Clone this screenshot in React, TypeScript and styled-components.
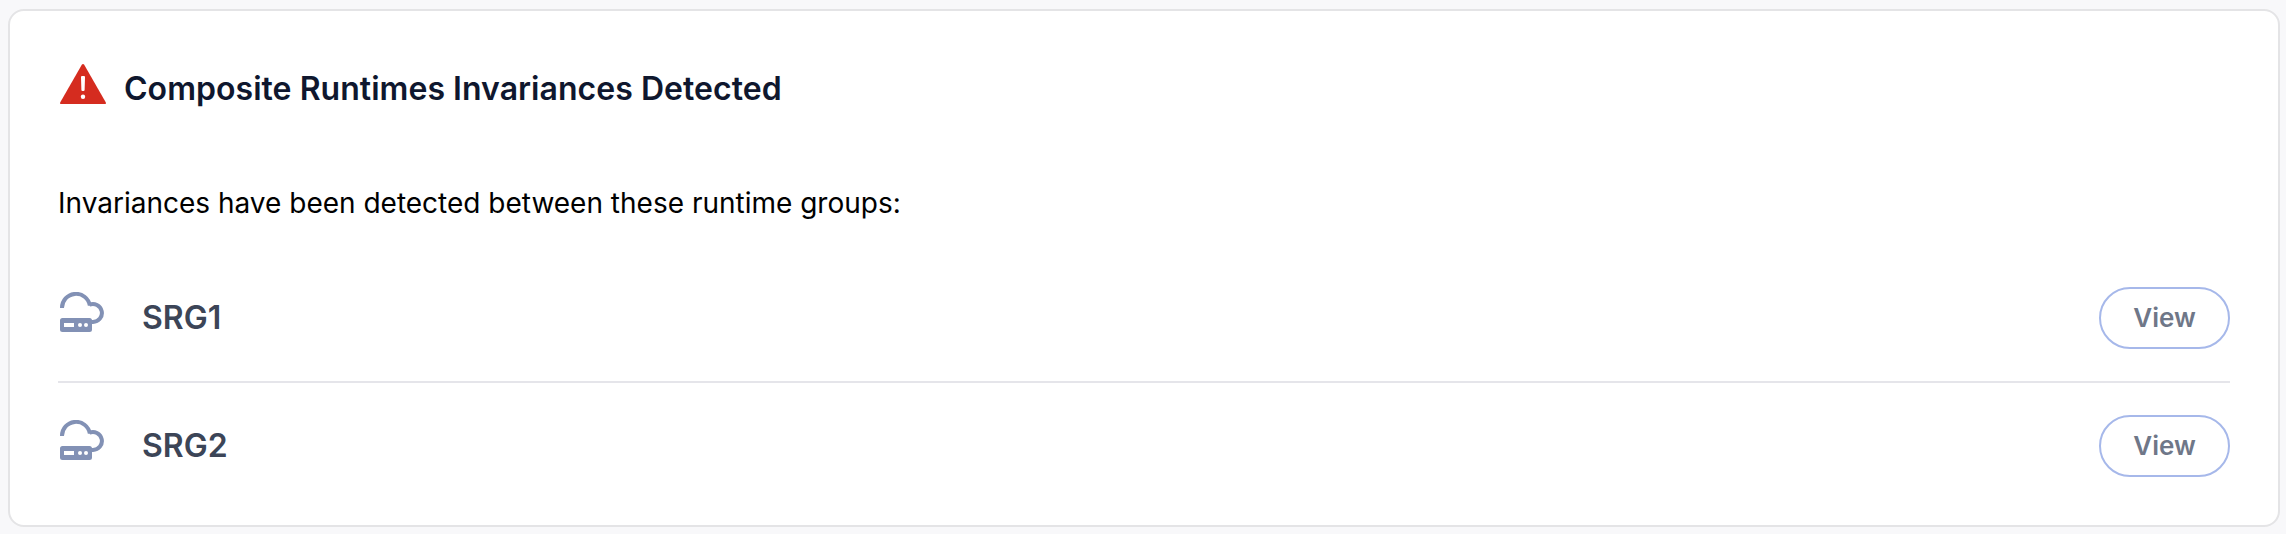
import React from "react";
import styled, { createGlobalStyle } from "styled-components";

const GlobalStyle = createGlobalStyle`
  * { box-sizing: border-box; }
  body {
    margin: 0;
    background: #f8f8fa;
    font-family: Inter, "Liberation Sans", sans-serif;
  }
`;

const Page = styled.main`
  height: 534px;
  padding: 9px 6px 7px 8px;
`;

const Card = styled.section`
  display: flex;
  flex-direction: column;
  height: 518px;
  padding: 46px 48px 0;
  border: 2px solid #e4e4e6;
  border-radius: 16px;
  background: #ffffff;
`;

const Header = styled.header`
  display: flex;
  align-items: flex-start;
  height: 120px;
`;

const WarningSvg = styled.svg`
  flex: none;
  width: 46px;
  height: 40px;
  margin: 7px 18px 0 2px;
`;

const Title = styled.h1`
  margin: 12px 0 0;
  color: #0f172e;
  font-size: 32px;
  font-weight: 600;
  line-height: 40px;
  letter-spacing: 0.04px;
  white-space: nowrap;
`;

const Message = styled.p`
  margin: 6px 0 0;
  height: 72px;
  color: #000000;
  font-size: 28px;
  line-height: 40px;
  white-space: nowrap;
`;

const List = styled.ul`
  margin: 0;
  padding: 0;
  list-style: none;
`;

const Row = styled.li`
  display: flex;
  align-items: center;
  height: 128px;
  border-bottom: 2px solid #e5e5ea;

  &:last-child {
    border-bottom-color: transparent;
  }
`;

const CloudSvg = styled.svg`
  flex: none;
  width: 44px;
  height: 40px;
  margin: 0 38px 12px 2px;
`;

const GroupName = styled.span`
  flex: 1;
  color: #3c4557;
  font-size: 32px;
  font-weight: 600;
  line-height: 40px;
`;

const ViewButton = styled.button`
  width: 131px;
  height: 62px;
  padding: 0;
  border: 2px solid #a6b8ea;
  border-radius: 31px;
  background: #ffffff;
  color: #6f7788;
  font: 600 26px/32px Inter, "Liberation Sans", sans-serif;
`;

const WarningIcon = () => (
  <WarningSvg viewBox="0 0 46 40" aria-hidden="true">
    <path
      d="M21.8.8Q23-.8 24.2.8L45.7 38.2Q46.5 40 44.7 40H1.3Q-.5 40 .3 38.2Z"
      fill="#d52c1f"
    />
    <path d="M21 13Q21 12 22 12H24Q25 12 25 13L24.6 26Q24.5 27 23.5 27H22.5Q21.5 27 21.4 26Z" fill="#fff" />
    <circle cx="23" cy="32.8" r="2.2" fill="#fff" />
  </WarningSvg>
);

const RuntimeGroupIcon = () => (
  <CloudSvg viewBox="0 0 44 40" aria-hidden="true">
    <path
      d="M2 16A14 14 0 0 1 29.8 13.5M29.2 12.8A9 9 0 1 1 33 30H31"
      fill="none"
      stroke="#8291b5"
      strokeWidth="4"
    />
    <path
      d="M2.5 26H29.5Q32 26 32 28.5V37.5Q32 40 29.5 40H2.5Q0 40 0 37.5V28.5Q0 26 2.5 26ZM4 31V35H14V31Z"
      fill="#8291b5"
      fillRule="evenodd"
    />
    <circle cx="20" cy="33" r="2" fill="#fff" />
    <circle cx="26" cy="33" r="2" fill="#fff" />
  </CloudSvg>
);

const groups = ["SRG1", "SRG2"];

export default function App() {
  return (
    <>
      <GlobalStyle />
      <Page>
        <Card>
          <Header>
            <WarningIcon />
            <Title>Composite Runtimes Invariances Detected</Title>
          </Header>
          <Message>Invariances have been detected between these runtime groups:</Message>
          <List>
            {groups.map((name) => (
              <Row key={name}>
                <RuntimeGroupIcon />
                <GroupName>{name}</GroupName>
                <ViewButton type="button">View</ViewButton>
              </Row>
            ))}
          </List>
        </Card>
      </Page>
    </>
  );
}
